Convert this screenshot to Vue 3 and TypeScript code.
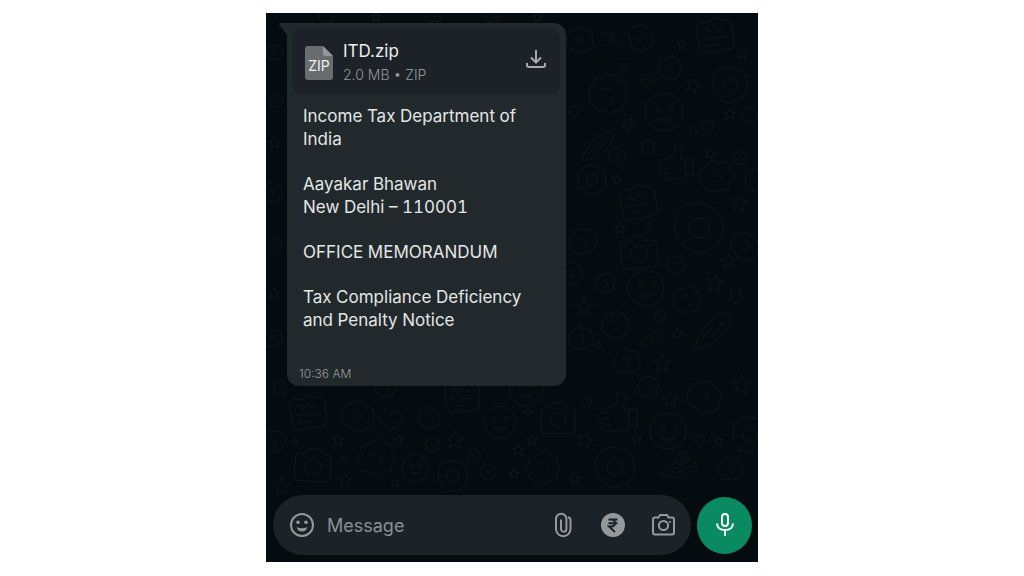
<script setup lang="ts">
import { ref } from 'vue'

type Shape = 'face' | 'donut' | 'star' | 'heart' | 'camera' | 'thumb' | 'flower' | 'note' | 'blob' | 'ring' | 'carrot'

// [shape, centre x, centre y, radius, rotation]
type Doodle = [Shape, number, number, number, number]

const doodles: Doodle[] = [
  ['blob', 314, 28, 14, 20], ['blob', 374, 25, 14, 80], ['note', 449, 23, 18, -6], ['star', 477, 41, 6, 10],
  ['flower', 404, 55, 12, 0], ['donut', 464, 72, 18, 0], ['flower', 342, 81, 20, 12], ['face', 398, 99, 19, -8],
  ['flower', 381, 68, 6, 0], ['star', 427, 73, 8, 20], ['star', 362, 111, 7, 30], ['flower', 442, 113, 6, 10],
  ['star', 464, 101, 6, 0], ['ring', 484, 102, 9, 0], ['carrot', 331, 133, 18, -10], ['flower', 382, 134, 7, 0],
  ['thumb', 409, 150, 18, 0], ['donut', 326, 167, 14, 0], ['blob', 451, 164, 18, 0], ['star', 351, 167, 5, 0],
  ['blob', 351, 143, 9, 40], ['note', 372, 190, 18, -8], ['ring', 490, 167, 12, 0], ['star', 474, 190, 8, 10],
  ['carrot', 345, 24, 10, 60], ['star', 416, 32, 5, 0], ['ring', 334, 50, 3, 0], ['ring', 308, 98, 6, 0],
  ['star', 444, 141, 6, 15], ['flower', 474, 145, 7, 0], ['ring', 427, 118, 4, 0], ['ring', 358, 53, 3, 0],
  ['donut', 433, 215, 25, 0], ['blob', 317, 229, 15, 0], ['camera', 373, 239, 18, -4], ['face', 380, 275, 18, 0],
  ['star', 449, 270, 9, 8], ['flower', 339, 270, 10, 0], ['flower', 421, 287, 14, 10], ['star', 318, 294, 9, 0],
  ['flower', 349, 312, 14, 20], ['blob', 315, 326, 13, 0], ['carrot', 446, 317, 22, -12], ['star', 411, 321, 6, 0],
  ['star', 396, 350, 9, 0], ['blob', 361, 349, 14, 10], ['star', 354, 215, 6, 0], ['blob', 479, 234, 16, 60],
  ['star', 463, 248, 8, 0], ['flower', 410, 252, 9, 0], ['star', 470, 283, 9, 30], ['blob', 304, 261, 14, 0],
  ['flower', 394, 303, 6, 0], ['carrot', 385, 325, 11, 0], ['ring', 332, 332, 3, 0], ['ring', 383, 212, 3, 0],
  ['note', 42, 400, 18, -4], ['blob', 92, 404, 17, 30], ['heart', 125, 408, 11, 0], ['flower', 163, 405, 11, 0],
  ['star', 189, 427, 9, 0], ['camera', 47, 452, 18, 3], ['flower', 110, 445, 19, 0], ['donut', 187, 463, 15, 0],
  ['face', 149, 455, 13, 0], ['face', 234, 409, 16, 0], ['flower', 166, 432, 7, 0], ['star', 129, 470, 5, 0],
  ['flower', 14, 375, 7, 0], ['flower', 222, 459, 8, 0], ['blob', 7, 429, 13, 0], ['star', 29, 429, 4, 0],
  ['star', 72, 427, 6, 0], ['star', 133, 427, 5, 0], ['star', 79, 467, 7, 0], ['star', 16, 473, 9, 0],
  ['blob', 120, 374, 12, 0], ['note', 196, 384, 17, 0], ['flower', 208, 443, 7, 0], ['ring', 77, 446, 3, 0],
  ['face', 260, 376, 17, 0], ['camera', 292, 405, 17, 0], ['thumb', 351, 400, 20, 0], ['face', 402, 418, 18, 0],
  ['donut', 484, 422, 18, 0], ['flower', 382, 374, 11, 0], ['blob', 438, 385, 18, 40], ['star', 404, 387, 8, 0],
  ['star', 266, 427, 6, 0], ['star', 475, 372, 10, 0], ['flower', 277, 455, 17, 0], ['donut', 349, 454, 20, 0],
  ['star', 309, 466, 6, 0], ['blob', 464, 457, 13, 0], ['star', 371, 426, 5, 0], ['star', 319, 427, 8, 20],
  ['star', 262, 400, 5, 0], ['ring', 321, 389, 5, 0], ['heart', 433, 428, 6, 0], ['carrot', 413, 455, 17, 20],
  ['star', 252, 437, 6, 0], ['star', 452, 428, 5, 0], ['blob', 416, 446, 7, 0], ['star', 248, 461, 5, 0],
  ['blob', 8, 40, 9, 0], ['flower', 10, 88, 7, 0], ['star', 9, 130, 6, 0], ['blob', 6, 180, 11, 0],
  ['flower', 9, 232, 7, 0], ['star', 8, 280, 6, 0], ['blob', 7, 326, 10, 0], ['ring', 60, 3, 8, 0],
  ['star', 110, 4, 5, 0], ['blob', 168, 2, 9, 0], ['flower', 226, 3, 7, 0], ['star', 272, 4, 5, 0]
]

const paragraphs: string[] = [
  'Income Tax Department of India',
  'Aayakar Bhawan\nNew Delhi – 110001',
  'OFFICE MEMORANDUM',
  'Tax Compliance Deficiency and Penalty Notice'
]

const draft = ref('')
</script>

<template>
  <div class="page">
    <main class="chat">
      <svg class="wallpaper" viewBox="0 0 492 549" preserveAspectRatio="xMidYMid slice" aria-hidden="true">
        <defs>
          <g id="d-face"><circle r="10" /><circle cx="-3" cy="-2" r="1.3" /><circle cx="4" cy="-2" r="1.3" /><path d="M-4 3Q0 8 4 3Q0 5-4 3" /></g>
          <g id="d-donut"><path d="M-2-10Q5-10 8-6Q11-1 9 4Q6 10 0 10Q-7 9-9 3Q-11-3-7-8Q-5-10-2-10Z" /><circle r="4" /></g>
          <g id="d-star"><path d="M0-10L3-3L10-3L4 2L6 9L0 5L-6 9L-4 2L-10-3L-3-3Z" /></g>
          <g id="d-heart"><path d="M0 9Q-10 2-10-4Q-9-9-5-9Q-1-9 0-5Q1-9 5-9Q9-9 10-4Q10 2 0 9Z" /></g>
          <g id="d-camera"><path d="M-8-6H-5L-3-9H3L5-6H8Q10-6 10-4V7Q10 9 8 9H-8Q-10 9-10 7V-4Q-10-6-8-6Z" /><circle cy="1" r="4.5" /><path d="M6-3H8M-8-3H-7" /></g>
          <g id="d-thumb"><path d="M-6-2L-1-4Q1-7 0-10Q4-11 4-7L3-2H6V8L0 9H-6Q-9 8-7 6Q-10 5-8 3Q-10 2-8 0Q-9-2-6-2ZM6-2H10V7H6M-7 0H-4M-7 3H-4M-6 6H-3" /></g>
          <g id="d-flower"><path d="M0-9Q3-12 5-7Q10-8 8-3Q12 0 8 3Q10 8 5 7Q3 12 0 8Q-4 11-5 7Q-10 7-8 3Q-12 0-8-3Q-9-8-4-7Q-3-11 0-9Z" /><path d="M-3-1Q-2-4 1-2M1 3Q4 3 3 0" /></g>
          <g id="d-note"><path d="M-10-6L-8-8L-2-8L0-10L7-8L10-6V6L8 8L-7 9L-9 7ZM-7-3L-4-5L-3-2L0-5L2-3L5-4M-7 1H7M-6 5H3" /></g>
          <g id="d-blob"><path d="M-9 3Q-11-4-5-7Q-3-11 1-8Q7-10 8-4Q12 1 7 4Q6 9 0 7Q-6 10-9 3ZM-3-1Q0-5 2-1Q3 3-1 2" /></g>
          <g id="d-ring"><circle r="9" /></g>
          <g id="d-carrot"><path d="M-10 7Q-6-1 3-6Q9-8 10-4Q8 2-1 6L-10 7ZM-5 3L2-2M0 3L6-3" /></g>
        </defs>
        <use
          v-for="([shape, x, y, r, turn], i) in doodles"
          :key="i"
          :href="'#d-' + shape"
          :transform="`translate(${x} ${y}) rotate(${turn}) scale(${r / 10})`"
        />
      </svg>

      <section class="messages" aria-label="Messages">
        <article class="bubble">
          <svg class="tail" viewBox="0 0 20 18" aria-hidden="true">
            <path d="M1 0H20V18H8V12L1 3Q-1 0 1 0Z" />
          </svg>
          <div class="file">
            <svg class="file-icon" viewBox="0 0 28 34" aria-hidden="true">
              <path d="M3 0H18L28 10V31Q28 34 25 34H3Q0 34 0 31V3Q0 0 3 0Z" fill="#696d70" />
              <path d="M18 0L28 10H20Q18 10 18 8Z" fill="#95989a" />
              <text x="14" y="25" text-anchor="middle">ZIP</text>
            </svg>
            <div class="file-info">
              <div class="file-name">ITD.zip</div>
              <div class="file-meta">2.0 MB • ZIP</div>
            </div>
            <button class="icon-button" type="button" aria-label="Download ITD.zip">
              <svg class="download" viewBox="0 0 20 20" aria-hidden="true">
                <path d="M10 1V13M5 8.500L10 13.500L15 8.500M1 14V16Q1 18 3 18H17Q19 18 19 16V14" />
              </svg>
            </button>
          </div>
          <div class="body">
            <p v-for="text in paragraphs" :key="text">{{ text }}</p>
          </div>
          <time class="time">10:36 AM</time>
        </article>
      </section>

      <form class="composer" @submit.prevent>
        <div class="field">
          <button class="icon-button" type="button" aria-label="Emoji">
            <svg class="line" viewBox="0 0 26 26" aria-hidden="true">
              <circle cx="13" cy="13" r="11" />
              <circle class="solid" cx="9" cy="10.300" r="1.800" />
              <circle class="solid" cx="17" cy="10.300" r="1.800" />
              <path class="solid" d="M7.500 15Q13 17.500 18.500 15Q17 19.500 13 19.500T7.500 15Z" />
            </svg>
          </button>
          <input v-model="draft" class="text" type="text" placeholder="Message" aria-label="Message" />
          <div class="actions">
            <button class="icon-button" type="button" aria-label="Attach">
              <svg class="line" viewBox="0 0 26 26" aria-hidden="true">
                <path d="M18 5.500Q20.500 5.500 20.500 8V17A7 7 0 0 1 6 17V7A5.200 5.200 0 0 1 16.400 7V17A2.700 2.700 0 0 1 11 17V7.500" />
              </svg>
            </button>
            <button class="icon-button" type="button" aria-label="Pay">
              <svg viewBox="0 0 26 26" aria-hidden="true">
                <circle cx="13" cy="13" r="12" fill="#95999c" />
                <path class="rupee" d="M8.500 7.500H17.500M8.500 11.200H17.500M9 7.500H11.500Q15 7.800 15 11T11.500 14.500H9L15 20" />
              </svg>
            </button>
            <button class="icon-button" type="button" aria-label="Camera">
              <svg class="line" viewBox="0 0 26 26" aria-hidden="true">
                <path d="M5 5.500H8.500L10 3H17L18.500 5.500H22Q24 5.500 24 7.500V20.500Q24 22.500 22 22.500H5Q3 22.500 3 20.500V7.500Q3 5.500 5 5.500Z" />
                <circle cx="13.500" cy="13.500" r="4.600" />
                <circle class="solid" cx="20" cy="10" r="1" />
              </svg>
            </button>
          </div>
        </div>
        <button class="mic" type="button" aria-label="Record voice message">
          <svg viewBox="0 0 26 26" aria-hidden="true">
            <rect x="10" y="2" width="6" height="12" rx="3" />
            <path d="M5 11.500Q5.500 18 13 18T21 11.500M13 18V24" />
          </svg>
        </button>
      </form>
    </main>
  </div>
</template>

<style>
body {
  margin: 0;
  background: #fff;
}
</style>

<style scoped>
.page {
  box-sizing: border-box;
  display: flex;
  justify-content: center;
  min-height: 100vh;
  padding: 13px 16px 14px;
  font-family: Inter, Roboto, "Liberation Sans", sans-serif;
}

.chat {
  position: relative;
  display: flex;
  flex-direction: column;
  flex: 1;
  max-width: 492px;
  overflow: hidden;
  background: #040c10;
}

.wallpaper {
  position: absolute;
  inset: 0;
  width: 100%;
  height: 100%;
  fill: none;
  stroke: #0e181c;
  stroke-width: 1;
}

.wallpaper path,
.wallpaper circle {
  vector-effect: non-scaling-stroke;
}

.messages {
  position: relative;
  flex: 1;
  padding: 10px 21px;
}

.bubble {
  position: relative;
  box-sizing: border-box;
  width: 62%;
  padding: 5px 6px 4px 5px;
  border-radius: 12px;
  background: #22292c;
}

.tail {
  position: absolute;
  top: 0;
  left: -8px;
  width: 20px;
  height: 18px;
  fill: #22292c;
}

.file {
  position: relative;
  display: flex;
  align-items: center;
  gap: 10px;
  box-sizing: border-box;
  min-height: 66px;
  padding: 3px 14px 0 13px;
  border-radius: 9px;
  background: #1d2228;
}

.file-icon {
  flex: none;
  width: 28px;
  height: 34px;
}

.file-icon text {
  fill: #f0f0f0;
  font-size: 14px;
}

.file-info {
  flex: 1;
}

.file-name {
  color: #eceeee;
  font-size: 17px;
  line-height: 24px;
}

.file-meta {
  color: #92969a;
  font-size: 14px;
  font-weight: 300;
  line-height: 24px;
}

.icon-button {
  display: flex;
  padding: 0;
  border: 0;
  background: none;
}

.icon-button svg {
  width: 26px;
  height: 26px;
}

.icon-button .download {
  width: 20px;
  height: 20px;
  margin-bottom: 8px;
  fill: none;
  stroke: #a8acae;
  stroke-width: 2;
}

.body {
  padding: 11px 12px 0 11px;
  color: #e4e6e6;
  font-size: 17px;
  font-variant-numeric: tabular-nums;
  line-height: 23px;
}

.body p {
  margin: 0 0 22px;
  white-space: pre-line;
}

.time {
  display: block;
  padding: 12px 7px 0;
  color: #999ea0;
  font-size: 12px;
  font-weight: 300;
  line-height: 16px;
}

.composer {
  position: relative;
  display: flex;
  align-items: center;
  gap: 6px;
  padding: 0 6px 7px 7px;
}

.field {
  display: flex;
  flex: 1;
  align-items: center;
  gap: 12px;
  box-sizing: border-box;
  min-width: 0;
  height: 60px;
  padding: 0 15px 0 16px;
  border-radius: 30px;
  background: #1b2329;
}

.text {
  flex: 1;
  min-width: 0;
  padding: 0;
  border: 0;
  outline: 0;
  background: none;
  color: #e4e6e6;
  font: inherit;
  font-size: 18px;
}

.text::placeholder {
  color: #8b9094;
  opacity: 1;
}

.actions {
  display: flex;
  gap: 24px;
}

.line {
  fill: none;
  stroke: #95999c;
  stroke-width: 2;
}

.line .solid {
  fill: #95999c;
  stroke: none;
}

.rupee {
  fill: none;
  stroke: #1b2329;
  stroke-width: 2;
}

.mic {
  display: flex;
  flex: none;
  align-items: center;
  justify-content: center;
  width: 55px;
  height: 57px;
  padding: 0;
  border: 0;
  border-radius: 50%;
  background: #0a8a61;
}

.mic svg {
  width: 26px;
  height: 26px;
  fill: none;
  stroke: #f4faf7;
  stroke-width: 2;
}
</style>
